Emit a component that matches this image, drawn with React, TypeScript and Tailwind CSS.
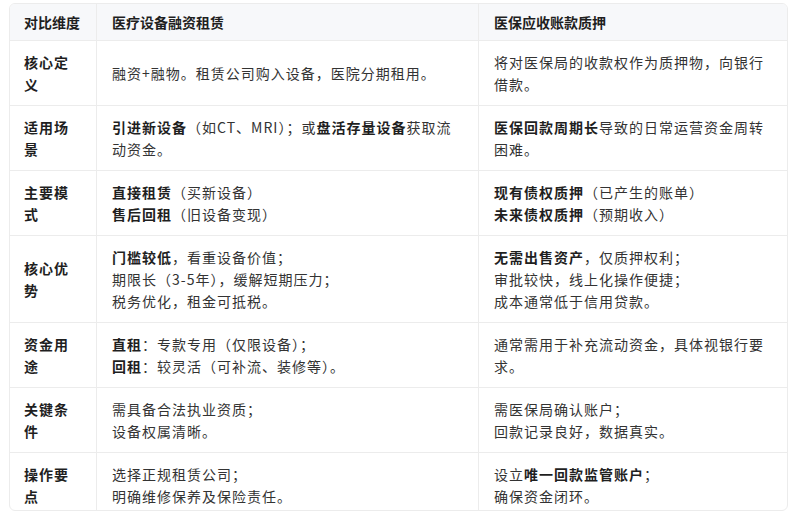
type Part = string | { b: string };

interface Row {
  label: string;
  left: Part[][];
  right: Part[][];
}

const rows: Row[] = [
  {
    label: "核心定义",
    left: [["融资+融物。租赁公司购入设备，医院分期租用。"]],
    right: [["将对医保局的收款权作为质押物，向银行借款。"]],
  },
  {
    label: "适用场景",
    left: [[{ b: "引进新设备" }, "（如CT、MRI）；或", { b: "盘活存量设备" }, "获取流动资金。"]],
    right: [[{ b: "医保回款周期长" }, "导致的日常运营资金周转困难。"]],
  },
  {
    label: "主要模式",
    left: [
      [{ b: "直接租赁" }, "（买新设备）"],
      [{ b: "售后回租" }, "（旧设备变现）"],
    ],
    right: [
      [{ b: "现有债权质押" }, "（已产生的账单）"],
      [{ b: "未来债权质押" }, "（预期收入）"],
    ],
  },
  {
    label: "核心优势",
    left: [
      [{ b: "门槛较低" }, "，看重设备价值；"],
      ["期限长（3-5年），缓解短期压力；"],
      ["税务优化，租金可抵税。"],
    ],
    right: [
      [{ b: "无需出售资产" }, "，仅质押权利；"],
      ["审批较快，线上化操作便捷；"],
      ["成本通常低于信用贷款。"],
    ],
  },
  {
    label: "资金用途",
    left: [
      [{ b: "直租" }, "：专款专用（仅限设备）；"],
      [{ b: "回租" }, "：较灵活（可补流、装修等）。"],
    ],
    right: [["通常需用于补充流动资金，具体视银行要求。"]],
  },
  {
    label: "关键条件",
    left: [["需具备合法执业资质；"], ["设备权属清晰。"]],
    right: [["需医保局确认账户；"], ["回款记录良好，数据真实。"]],
  },
  {
    label: "操作要点",
    left: [["选择正规租赁公司；"], ["明确维修保养及保险责任。"]],
    right: [["设立", { b: "唯一回款监管账户" }, "；"], ["确保资金闭环。"]],
  },
];

function Lines({ lines }: { lines: Part[][] }) {
  return (
    <>
      {lines.map((line, i) => (
        <div key={i}>
          {line.map((p, j) =>
            typeof p === "string" ? (
              <span key={j}>{p}</span>
            ) : (
              <strong key={j} className="font-bold text-[#1f1f1f]">
                {p.b}
              </strong>
            )
          )}
        </div>
      ))}
    </>
  );
}

export default function App() {
  return (
    <div
      className="w-[797px] h-[512px] bg-white pt-[3px] pl-[9px] overflow-hidden"
      style={{ fontFamily: '"Noto Sans CJK SC", "Noto Sans", sans-serif' }}
    >
      <div className="w-[779px] h-[508px] border border-[#ececec] rounded-[6px] overflow-hidden">
        <div className="grid grid-cols-[87px_382px_1fr] text-[14px] leading-[22px] text-[#333]">
          {/* Header row */}
          <div className="bg-[#f7f8fa] border-r border-b border-[#ececec] pl-[14px] pr-[15px] py-[7px] font-bold text-[#1f1f1f]">
            对比维度
          </div>
          <div className="bg-[#f7f8fa] border-r border-b border-[#ececec] px-[15px] py-[7px] font-bold text-[#1f1f1f]">
            医疗设备融资租赁
          </div>
          <div className="bg-[#f7f8fa] border-b border-[#ececec] px-[15px] py-[7px] font-bold text-[#1f1f1f]">
            医保应收账款质押
          </div>

          {rows.map((r) => (
            <div key={r.label} className="contents">
              <div className="border-r border-b border-[#ececec] pl-[14px] pr-[15px] py-[10px] flex items-center font-bold text-[#1f1f1f] tracking-[1px]">
                {r.label}
              </div>
              <div className="border-r border-b border-[#ececec] px-[15px] py-[10px] flex flex-col justify-center tracking-[1px]">
                <Lines lines={r.left} />
              </div>
              <div className="border-b border-[#ececec] px-[15px] py-[10px] flex flex-col justify-center tracking-[1px]">
                <Lines lines={r.right} />
              </div>
            </div>
          ))}
        </div>
      </div>
    </div>
  );
}
